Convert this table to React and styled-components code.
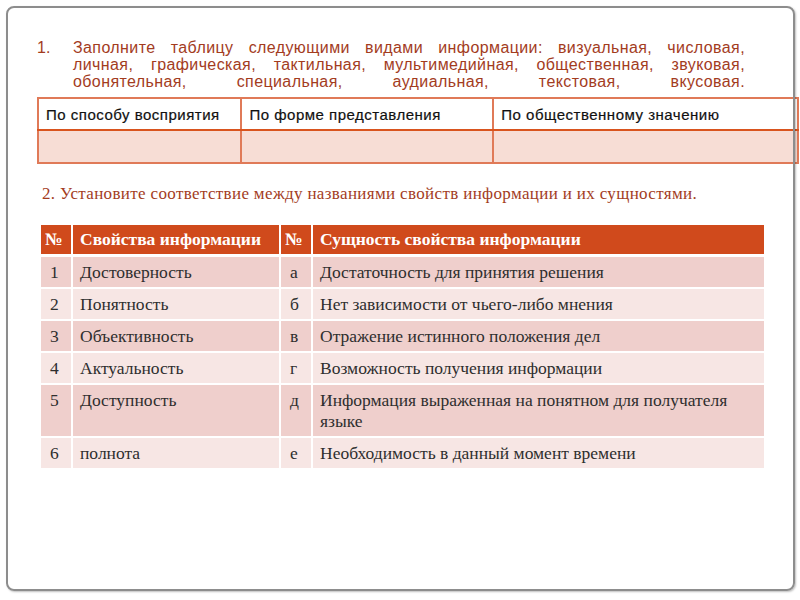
import React from 'react';
import styled, { createGlobalStyle } from 'styled-components';

const GlobalStyle = createGlobalStyle`
  html, body {
    margin: 0;
    padding: 0;
    background: #ffffff;
  }
  body {
    font-family: "Liberation Sans", Arial, sans-serif;
  }
`;

const Page = styled.div`
  width: 800px;
  height: 600px;
  padding: 6px 5px 9px 6px;
  box-sizing: border-box;
  overflow: hidden;
`;

const Slide = styled.div`
  position: relative;
  height: 100%;
  box-sizing: border-box;
  padding: 33px 0 0 31px;

  &::after {
    content: '';
    position: absolute;
    inset: 0;
    border: 2px solid #8d8d8d;
    border-radius: 8px;
    box-shadow: 1px 1px 2px rgba(0, 0, 0, 0.25);
    pointer-events: none;
  }
`;

const Task = styled.div`
  display: flex;
  width: 708px;
  color: #a33c1e;
  font-family: "Liberation Sans", Arial, sans-serif;
  font-size: 16px;
  line-height: 17px;
`;

const TaskNum = styled.span`
  flex: 0 0 36px;
`;

const TaskText = styled.p`
  margin: 0;
  flex: 1;
  text-align: justify;
  text-align-last: justify;
  letter-spacing: 0.4px;
  white-space: nowrap;
`;

const KindsTable = styled.table`
  margin-top: 7px;
  width: 762px;
  border-collapse: collapse;
  font-family: "Liberation Sans", Arial, sans-serif;
  font-size: 15px;
  color: #111;
`;

const KindsHead = styled.th`
  height: 30px;
  padding: 0 0 0 7px;
  text-align: left;
  font-weight: normal;
  background: #ffffff;
  border: 2px solid #e07a58;
  border-bottom: 2px solid #d9541e;
  width: ${p => p.$w}px;
  letter-spacing: 0.5px;
  -webkit-text-stroke: 0.2px #111;
`;

const KindsCell = styled.td`
  height: 31px;
  padding: 0;
  background: #f7ddd5;
  border: 2px solid #e07a58;
`;

const Subtitle = styled.p`
  margin: 20px 0 0 5px;
  color: #a33c1e;
  font-family: "Liberation Serif", "Times New Roman", serif;
  font-size: 17px;
  line-height: 20px;
  letter-spacing: 0.35px;
`;

const Matches = styled.div`
  display: grid;
  grid-template-columns: 30px 206px 30px 451px;
  column-gap: 2px;
  row-gap: 2px;
  margin: 21px 0 0 4px;
  width: 723px;
  font-family: "Liberation Serif", "Times New Roman", serif;
  font-size: 17.5px;
  line-height: 21px;
  color: #2e2e2e;
`;

const HeadCell = styled.div`
  background: #d04a1c;
  color: #ffffff;
  font-weight: bold;
  height: 29px;
  display: flex;
  align-items: center;
  padding-left: ${p => (p.$narrow ? 4 : 7)}px;
  margin-bottom: 1px;
  font-size: 17.5px;
`;

const Cell = styled.div`
  background: ${p => (p.$odd ? '#efcfcc' : '#f7e6e4')};
  min-height: 30px;
  padding: 5px 6px 4px ${p => (p.$narrow ? 9 : 7)}px;
  box-sizing: border-box;
`;

const rows = [
  ['1', 'Достоверность', 'а', 'Достаточность для принятия решения'],
  ['2', 'Понятность', 'б', 'Нет зависимости от чьего-либо мнения'],
  ['3', 'Объективность', 'в', 'Отражение истинного положения дел'],
  ['4', 'Актуальность', 'г', 'Возможность получения информации'],
  ['5', 'Доступность', 'д', 'Информация выраженная на понятном для получателя языке'],
  ['6', 'полнота', 'е', 'Необходимость в данный момент времени'],
];

export default function App() {
  return (
    <Page>
      <GlobalStyle />
      <Slide>
        <Task>
          <TaskNum>1.</TaskNum>
          <TaskText>
            Заполните таблицу следующими видами информации: визуальная, числовая,<br />
            личная, графическая, тактильная, мультимедийная, общественная, звуковая,<br />
            обонятельная, специальная, аудиальная, текстовая, вкусовая.
          </TaskText>
        </Task>

        <KindsTable>
          <thead>
            <tr>
              <KindsHead $w={202}>По способу восприятия</KindsHead>
              <KindsHead $w={252}>По форме представления</KindsHead>
              <KindsHead $w={308}>По общественному значению</KindsHead>
            </tr>
          </thead>
          <tbody>
            <tr>
              <KindsCell />
              <KindsCell />
              <KindsCell />
            </tr>
          </tbody>
        </KindsTable>

        <Subtitle>2. Установите соответствие между названиями свойств информации и их сущностями.</Subtitle>

        <Matches>
          <HeadCell $narrow>№</HeadCell>
          <HeadCell>Свойства информации</HeadCell>
          <HeadCell $narrow>№</HeadCell>
          <HeadCell>Сущность свойства информации</HeadCell>
          {rows.map((r, i) => (
            <React.Fragment key={r[0]}>
              <Cell $odd={i % 2 === 0} $narrow>{r[0]}</Cell>
              <Cell $odd={i % 2 === 0}>{r[1]}</Cell>
              <Cell $odd={i % 2 === 0} $narrow>{r[2]}</Cell>
              <Cell $odd={i % 2 === 0}>{r[3]}</Cell>
            </React.Fragment>
          ))}
        </Matches>
      </Slide>
    </Page>
  );
}
